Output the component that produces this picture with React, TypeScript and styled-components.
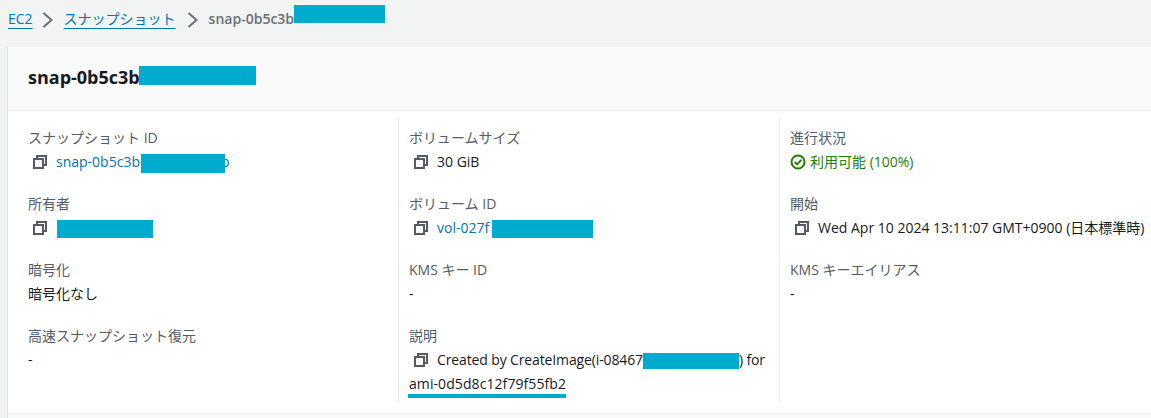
import React from "react";
import styled, { createGlobalStyle } from "styled-components";

const Global = createGlobalStyle`
  html, body { margin: 0; padding: 0; background: #f2f3f3; overflow: hidden; }
  body { font-family: "Open Sans", "Noto Sans CJK JP", sans-serif; font-size: 14px; line-height: 20px; color: #16191f; }
`;
const Page = styled.div`width: 1151px; height: 418px; overflow: hidden; display: flex; flex-direction: column;`;
const Breadcrumbs = styled.nav`height: 47px; box-sizing: border-box; padding: 5px 0 0 8px; display: flex; align-items: flex-start;`;
const Crumb = styled.a<{ $shift?: number }>`color: #0073bb; text-decoration: underline; text-underline-offset: 4px; line-height: 28px; margin-right: ${(p) => p.$shift || 0}px;`;
const Current = styled.span`color: #687078; font-size: 14px; font-weight: 600; line-height: 28px; height: 28px; display: flex; align-items: center; white-space: nowrap;`;
const Chevron = styled.svg`width: 12px; height: 16px; margin: 7px 10px 0 10px; flex: none;`;
const Card = styled.section`margin-left: 7px; border-left: 1px solid #e4e6e6; background: #fff; flex: 1; display: flex; flex-direction: column; min-height: 0;`;
const CardHeader = styled.header`height: 64px; box-sizing: border-box; background: #fafafa; border-bottom: 1px solid #eaeded; padding: 0 0 4px 20px; display: flex; align-items: center;`;
const Title = styled.h1`margin: 0; font-size: 18px; font-weight: 700; line-height: 24px; color: #16191f; display: flex; align-items: center; white-space: nowrap;`;
const Columns = styled.div`height: 303px; box-sizing: border-box; border-bottom: 1px solid #eaeded; padding-top: 6px; display: grid; grid-template-columns: 391px 381px 1fr;`;
const Column = styled.div<{ $first?: boolean; $divider?: boolean }>`
  height: 286px; box-sizing: border-box; padding: 11px 0 0 ${(p) => (p.$first ? "20px" : "10px")};
  border-right: ${(p) => (p.$divider ? "1px solid #eaeded" : "none")};
  display: flex; flex-direction: column; gap: 20px; min-width: 0;
`;
const Field = styled.div`display: flex; flex-direction: column; gap: 4px; min-height: 46px;`;
const Label = styled.div`color: #545b64; line-height: 20px; white-space: nowrap;`;
const Value = styled.div`color: #16191f; line-height: 20px; white-space: nowrap;`;
const CopyRow = styled.div`padding-left: 5px; line-height: 24px; white-space: nowrap; margin-top: -2px;`;
const Description = styled(CopyRow)`white-space: normal; letter-spacing: -0.13px;`;
const CopyIcon = styled.svg`width: 14px; height: 14px; margin-right: 9px; vertical-align: -2px;`;
const Link = styled.a`color: #0073bb;`;
const Redact = styled.span<{ $w: number; $h: number; $before?: number; $after?: number; $lift?: number }>`
  display: inline-block; position: relative; z-index: 1;
  width: ${(p) => p.$w}px; height: ${(p) => p.$h}px; background: #00acce; vertical-align: middle;
  margin: 0 ${(p) => p.$after || 0}px ${(p) => p.$lift || 0}px ${(p) => p.$before || 0}px;
`;
const Ami = styled.div`margin-left: -6px; padding-left: 1px; display: inline-block; border-bottom: 4px solid #00acce; line-height: 20px; letter-spacing: 0.08px;`;
const Status = styled.div`color: #1d8102; display: flex; align-items: center; gap: 4px; line-height: 20px;`;
const Footer = styled.div`flex: 1; background: #fafafa;`;

const Copy = () => (
  <CopyIcon viewBox="0 0 14 14" fill="none" stroke="#545b64" strokeWidth="2">
    <rect x="1" y="4" width="9" height="9" />
    <path d="M4 4V1h9v9h-3" />
  </CopyIcon>
);
const Arrow = () => (
  <Chevron viewBox="0 0 12 16" fill="none" stroke="#687078" strokeWidth="2">
    <path d="M1.5 1l8 7-8 7" />
  </Chevron>
);

export default function App() {
  return (
    <Page>
      <Global />
      <Breadcrumbs>
        <Crumb $shift={-1}>EC2</Crumb>
        <Arrow />
        <Crumb $shift={1}>スナップショット</Crumb>
        <Arrow />
        <Current>snap-0b5c3b<Redact $w={91} $h={18} $lift={10} /></Current>
      </Breadcrumbs>
      <Card>
        <CardHeader>
          <Title>snap-0b5c3b<Redact $w={117} $h={19} $lift={3} $before={-1} /></Title>
        </CardHeader>
        <Columns>
          <Column $first $divider>
            <Field>
              <Label>スナップショット ID</Label>
              <CopyRow><Copy /><Link>snap-0b5c3b<Redact $w={84} $h={19} $before={1} $after={-4} />b</Link></CopyRow>
            </Field>
            <Field>
              <Label>所有者</Label>
              <CopyRow><Copy /><Redact $w={96} $h={18} $before={1} /></CopyRow>
            </Field>
            <Field>
              <Label>暗号化</Label>
              <Value>暗号化なし</Value>
            </Field>
            <Field>
              <Label>高速スナップショット復元</Label>
              <Value>-</Value>
            </Field>
          </Column>
          <Column $divider>
            <Field>
              <Label>ボリュームサイズ</Label>
              <CopyRow><Copy />30 GiB</CopyRow>
            </Field>
            <Field>
              <Label>ボリューム ID</Label>
              <CopyRow><Copy /><Link>vol-027f<Redact $w={101} $h={18} $before={3} /></Link></CopyRow>
            </Field>
            <Field>
              <Label>KMS キー ID</Label>
              <Value>-</Value>
            </Field>
            <Field>
              <Label>説明</Label>
              <Description>
                <Copy />Created by CreateImage(i-08467<Redact $w={96} $h={16} />) for
                <br />
                <Ami>ami-0d5d8c12f79f55fb2</Ami>
              </Description>
            </Field>
          </Column>
          <Column>
            <Field>
              <Label>進行状況</Label>
              <Status>
                <svg width="16" height="16" viewBox="0 0 16 16" fill="none" stroke="#1d8102" strokeWidth="2">
                  <circle cx="8" cy="8" r="6.5" />
                  <path d="M4.8 8l2.3 2.4 4.2-4.6" />
                </svg>
                利用可能 (100%)
              </Status>
            </Field>
            <Field>
              <Label>開始</Label>
              <CopyRow><Copy />Wed Apr 10 2024 13:11:07 GMT+0900 (日本標準時)</CopyRow>
            </Field>
            <Field>
              <Label>KMS キーエイリアス</Label>
              <Value>-</Value>
            </Field>
          </Column>
        </Columns>
        <Footer />
      </Card>
    </Page>
  );
}
